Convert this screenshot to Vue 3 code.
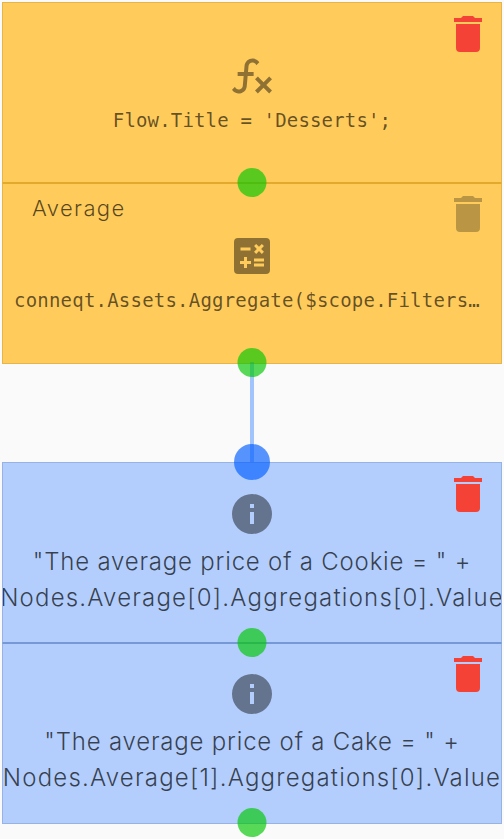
<script setup>
const icons = {
  trash: 'M19,4H15.5L14.5,3H9.5L8.5,4H5V6H19M6,19A2,2 0 0,0 8,21H16A2,2 0 0,0 18,19V7H6V19Z',
  function: 'M12.42,5.29C11.32,5.19 10.35,6 10.25,7.11L10,10H12.82V12H9.82L9.38,17.07C9.18,19.27 7.24,20.9 5.04,20.7C3.79,20.59 2.66,19.9 2,18.83L3.5,17.33C3.83,18.38 4.96,18.97 6,18.63C6.78,18.39 7.33,17.7 7.4,16.89L7.82,12H4.82V10H8L8.27,6.93C8.46,4.73 10.39,3.1 12.6,3.28C13.86,3.39 15,4.09 15.66,5.17L14.16,6.67C13.91,5.9 13.23,5.36 12.42,5.29M22,13.65L20.59,12.24L17.76,15.07L14.93,12.24L13.5,13.65L16.35,16.5L13.5,19.31L14.93,20.72L17.76,17.89L20.59,20.72L22,19.31L19.17,16.5L22,13.65Z',
  calculator: 'M19,3H5A2,2 0 0,0 3,5V19A2,2 0 0,0 5,21H19A2,2 0 0,0 21,19V5A2,2 0 0,0 19,3M13.03,7.06L14.09,6L15.5,7.41L16.91,6L17.97,7.06L16.56,8.47L17.97,9.88L16.91,10.94L15.5,9.54L14.09,10.94L13.03,9.88L14.44,8.47L13.03,7.06M6.25,7.72H11.25V9.22H6.25V7.72M11.5,16H9.5V18H8V16H6V14.5H8V12.5H9.5V14.5H11.5V16M18,17.25H13V15.75H18V17.25M18,14.75H13V13.25H18V14.75Z',
  info: 'M13,9H11V7H13M13,17H11V11H13M12,2A10,10 0 1,0 22,12A10,10 0 0,0 12,2Z'
}

const groups = [
  {
    kind: 'action',
    nodes: [
      { icon: 'function', code: "Flow.Title = 'Desserts';" },
      { icon: 'calculator', title: 'Average', code: 'conneqt.Assets.Aggregate($scope.Filters…', muted: true }
    ]
  },
  {
    kind: 'message',
    input: true,
    nodes: [
      { icon: 'info', lines: ['"The average price of a Cookie = " +', 'Nodes.Average[0].Aggregations[0].Value'] },
      { icon: 'info', lines: ['"The average price of a Cake = " +', 'Nodes.Average[1].Aggregations[0].Value'] }
    ]
  }
]
</script>

<template>
  <main class="flow">
    <section v-for="group in groups" :key="group.kind" class="group" :class="group.kind">
      <span v-if="group.input" class="link"></span>
      <span v-if="group.input" class="port input"></span>
      <article v-for="(node, i) in group.nodes" :key="i" class="node">
        <h2 v-if="node.title" class="title">{{ node.title }}</h2>
        <button class="remove" :class="{ muted: node.muted }" aria-label="Delete">
          <svg viewBox="0 0 24 24"><path :d="icons.trash" /></svg>
        </button>
        <div class="content">
          <svg class="icon" viewBox="0 0 24 24"><path :d="icons[node.icon]" /></svg>
          <code v-if="node.code">{{ node.code }}</code>
          <p v-for="(line, n) in node.lines" :key="n" class="line" :class="{ reference: n > 0 }">{{ line }}</p>
        </div>
        <span class="port output"></span>
      </article>
    </section>
  </main>
</template>

<style>
body { background: #fafafa; }
</style>

<style scoped>
.flow {
  box-sizing: border-box;
  height: 839px;
  padding: 2px;
  display: flex;
  flex-direction: column;
  gap: 98px;
  overflow: hidden;
  background: #fafafa;
  font-family: Inter, "Noto Sans", sans-serif;
}
.group {
  position: relative;
  box-sizing: border-box;
  height: 362px;
  flex: none;
}
.node {
  position: relative;
  box-sizing: border-box;
  height: 181px;
  border: 1px solid;
}
.action .node { background: #ffcc5c; border-color: #e5b54b; }
.message .node { background: #b3cefd; border-color: #96b3e4; }
.action .node + .node { border-top-color: #e3a92d; }
.action .node:not(:last-child) { border-bottom-color: #e3a92d; }
.message .node + .node { border-top-color: #7499d6; }
.message .node:not(:last-child) { border-bottom-color: #7499d6; }
.content {
  display: flex;
  flex-direction: column;
  align-items: center;
  padding-top: 49px;
  overflow: hidden;
}
.message .content { padding-top: 27px; }
.action .node + .node .content { padding-top: 48px; }
.message .node:last-child .content { padding-top: 26px; }
.icon { width: 48px; height: 48px; flex: none; fill: rgba(0, 0, 0, .44); }
code {
  margin-top: 8px;
  font: 19px/24px "DejaVu Sans Mono", monospace;
  letter-spacing: .16px;
  color: rgba(0, 0, 0, .62);
  white-space: pre;
}
.title ~ .content code { margin-right: 10px; letter-spacing: .21px; }
.line {
  margin: 0;
  font-size: 24px;
  font-weight: 300;
  line-height: 36px;
  letter-spacing: .8px;
  color: rgba(0, 0, 0, .7);
  white-space: pre;
}
.line.reference { letter-spacing: 1.2px; }
.message .icon { margin-bottom: 6px; }
.title {
  position: absolute;
  left: 29px;
  top: 8px;
  margin: 0;
  font-size: 22px;
  font-weight: 300;
  line-height: 32px;
  letter-spacing: 1.4px;
  color: rgba(0, 0, 0, .66);
}
.remove {
  position: absolute;
  right: 9px;
  top: 7px;
  width: 48px;
  height: 48px;
  padding: 0;
  border: 0;
  background: none;
  fill: #f44336;
}
.node:last-child .remove { top: 6px; }
.remove svg { display: block; width: 48px; height: 48px; }
.remove.muted { fill: rgba(0, 0, 0, .27); }
.port {
  position: absolute;
  z-index: 2;
  left: 50%;
  border-radius: 50%;
  transform: translateX(-50%);
}
.output { width: 29px; height: 29px; bottom: -15px; background: rgba(0, 200, 0, .65); }
.node:last-child .output { bottom: -14px; }
.input { width: 36px; height: 36px; top: -18px; background: rgba(0, 92, 255, .65); }
.link {
  position: absolute;
  z-index: 1;
  left: 248px;
  top: -100px;
  width: 4px;
  height: 100px;
  background: rgba(41, 121, 255, .42);
}
</style>
